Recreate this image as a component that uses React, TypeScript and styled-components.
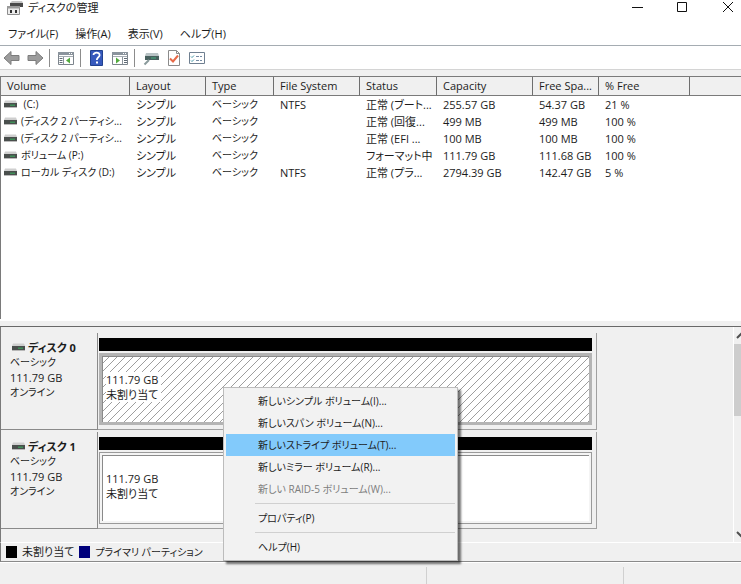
import React from "react";
import styled, { createGlobalStyle } from "styled-components";

const GlobalStyle = createGlobalStyle`
  * { box-sizing: border-box; }
  body {
    margin: 0;
    background: #fff;
    color: #1c1c1c;
    font-family: "Open Sans", "Noto Sans CJK JP", sans-serif;
    font-size: 11px;
    line-height: 16px;
    font-feature-settings: "palt" 1;
  }
  button {
    font: inherit;
    font-feature-settings: inherit;
    color: inherit;
    border: 0;
    padding: 0;
    background: transparent;
  }
`;

const Window = styled.div`
  position: relative;
  display: flex;
  flex-direction: column;
  min-height: 100vh;
  overflow: hidden;
  background: #f0f0f0;
`;

const TitleBar = styled.header`
  display: flex;
  align-items: flex-start;
  height: 22px;
  padding-left: 7px;
  gap: 5px;
  background: #fff;
`;

const Title = styled.h1`
  flex: 1;
  margin: 0;
  font-size: 11px;
  font-weight: 400;
  line-height: 16px;
`;

const WindowButtons = styled.div`
  display: flex;
  gap: 30px;
  padding-right: 3px;
`;

const WindowButton = styled.button`
  display: block;
  width: 16px;
  height: 16px;
`;

const MenuBar = styled.nav`
  display: flex;
  align-items: center;
  height: 24px;
  padding-left: 8px;
  gap: 17px;
  background: #fff;
  border-bottom: 1px solid #a5acb2;
`;

const ToolBar = styled.div`
  display: flex;
  align-items: center;
  height: 24px;
  padding: 0 3px;
  background: #fff;
  border-bottom: 1px solid #d4d4d4;
`;

const ToolButton = styled.button`
  display: block;
  width: 18px;
  height: 18px;
  margin-right: 5px;
`;

const ToolDivider = styled.span`
  width: 1px;
  height: 18px;
  margin-right: 7px;
  background: #8c8c8c;
`;

const VolumePane = styled.section`
  flex: 1;
  min-height: 240px;
  margin-top: 6px;
  background: #fff;
  border-top: 1px solid #7a7a7a;
  border-left: 1px solid #7a7a7a;
`;

const VolumeTable = styled.table`
  width: 100%;
  table-layout: fixed;
  border-collapse: separate;
  border-spacing: 0;
`;

const Col = styled.col<{ $w?: number }>`
  width: ${(p) => (p.$w ? `${p.$w}px` : "auto")};
`;

const HeadCell = styled.th`
  height: 19px;
  padding: 0 0 0 6px;
  overflow: hidden;
  white-space: nowrap;
  text-align: left;
  font-weight: 400;
  line-height: 16px;
  background: #f0f0f0;
  border-right: 1px solid #6e6e6e;
  border-bottom: 1px solid #7a7a7a;
  &:last-child { border-right: 0; }
`;

const Cell = styled.td<{ $compact?: boolean; $lead?: boolean }>`
  height: 17px;
  padding: 0 0 0 ${(p) => (p.$lead ? 3 : 6)}px;
  overflow: hidden;
  white-space: nowrap;
  font-size: ${(p) => (p.$compact ? 10 : 11)}px;
  line-height: 17px;
`;

const NameCell = styled.span`
  display: flex;
  align-items: center;
  gap: 4px;
`;

const Splitter = styled.div`
  height: 8px;
  border-top: 2px solid #fff;
  border-bottom: 1px solid #696969;
  background: #f0f0f0;
`;

const LowerPane = styled.section`
  display: flex;
  border-left: 1px solid #7a7a7a;
`;

const Disks = styled.div`
  flex: 1;
  min-width: 0;
  padding: 6px 136px 13px 0;
  display: flex;
  flex-direction: column;
  gap: 2px;
`;

const Disk = styled.article`
  display: grid;
  grid-template-columns: 97px 1fr;
  height: 97px;
`;

const DiskLabel = styled.div`
  padding: 7px 0 0 9px;
  line-height: 15px;
  border-right: 1px solid #8a8a8a;
  border-bottom: 1px solid #8a8a8a;
`;

const DiskName = styled.h2`
  display: flex;
  align-items: center;
  gap: 3px;
  margin: 0 0 0 2px;
  font-size: 11px;
  font-weight: 700;
  line-height: 15px;
`;

const DiskKind = styled.div`
  font-size: 10px;
`;

const DiskTrack = styled.div`
  display: flex;
  flex-direction: column;
  gap: 2px;
  padding: 5px 4px 4px 1px;
  border-right: 1px solid #a0a0a0;
  border-bottom: 1px solid #a0a0a0;
`;

const DiskStripe = styled.div`
  height: 13px;
  background: #000;
`;

const hatch = encodeURIComponent(
  `<svg xmlns="http://www.w3.org/2000/svg" width="8" height="8"><path d="M-1 9L9 -1M-1 1L1 -1M7 9L9 7" stroke="#858585" stroke-width="0.8"/></svg>`
);

const Region = styled.div<{ $selected?: boolean }>`
  flex: 1;
  display: flex;
  flex-direction: column;
  align-items: flex-start;
  justify-content: center;
  padding: 0 0 4px 4px;
  line-height: 15px;
  background: #fff;
  border: 3px solid ${(p) => (p.$selected ? "#b4b4b4" : "#f4f4f4")};
  outline: 1px solid ${(p) => (p.$selected ? "#b4b4b4" : "#9a9a9a")};
  outline-offset: -1px;
  box-shadow: inset 1px 1px 0 #8a8a8a;
  ${(p) => p.$selected && `background-image: url("data:image/svg+xml,${hatch}");`}
`;

const RegionText = styled.span`
  padding-right: 3px;
  background: #fff;
`;

const ScrollBar = styled.div`
  display: flex;
  flex-direction: column;
  width: 8px;
  overflow: hidden;
  border-left: 1px solid #fff;
`;

const ScrollButton = styled.button`
  display: block;
  width: 15px;
  height: 17px;
`;

const ScrollTrack = styled.div`
  flex: 1;
`;

const ScrollThumb = styled.div`
  height: 72px;
  background: #cdcdcd;
`;

const Legend = styled.div`
  display: flex;
  align-items: center;
  height: 20px;
  padding-left: 5px;
  gap: 5px;
  border-top: 1px solid #fff;
  border-left: 1px solid #7a7a7a;
  border-bottom: 1px solid #8a8a8a;
`;

const LegendText = styled.span<{ $compact?: boolean }>`
  font-size: ${(p) => (p.$compact ? 10 : 11)}px;
`;

const Swatch = styled.span<{ $color: string }>`
  width: 11px;
  height: 12px;
  background: ${(p) => p.$color};
`;

const StatusBar = styled.footer`
  display: grid;
  grid-template-columns: 427px 197px 1fr;
  height: 22px;
  padding-top: 4px;
  border-top: 1px solid #fff;
`;

const StatusCell = styled.div`
  border-right: 1px solid #d0d0d0;
  &:last-child { border-right: 0; }
`;

const ContextMenu = styled.div`
  position: absolute;
  left: 223px;
  bottom: 23px;
  width: 235px;
  padding: 2px;
  font-size: 10px;
  background: #f2f2f2;
  border: 1px solid #bcbcbc;
  box-shadow: 3px 3px 2px rgba(0, 0, 0, 0.55);
`;

const ContextItem = styled.button<{ $active?: boolean }>`
  display: block;
  width: 100%;
  height: 22px;
  padding-left: 32px;
  text-align: left;
  white-space: nowrap;
  background: ${(p) => (p.$active ? "#82cafb" : "transparent")};
  &:disabled { color: #7d7d7d; }
`;

const ContextDivider = styled.hr`
  height: 1px;
  margin: 3px 0 3px 29px;
  border: 0;
  background: #d0d0d0;
`;

const Drive = styled.svg`
  flex: none;
`;

const DriveIcon = () => (
  <Drive width="13" height="9" viewBox="0 0 13 9" aria-hidden="true">
    <path d="M1 0.500h11l1 2.500H0z" fill="#cfcfcf" />
    <path d="M0 3h13v4H0z" fill="#4a4f4d" />
    <path d="M0 7h13v.8H0z" fill="#aaa" />
    <path d="M6 4.500h5v1.500H6z" fill="#3f8f58" />
  </Drive>
);

const AppIcon = () => (
  <svg width="16" height="16" viewBox="0 0 16 16" aria-hidden="true">
    <path d="M5 1h10l1 2H3z" fill="#c4c4c4" />
    <path d="M3 3h13v4H3z" fill="#4a4a4a" />
    <path d="M0.500 7.500h12v7h-12z" fill="#ececec" stroke="#8d8d8d" />
    <path d="M0 6h13v2.500H0z" fill="#9a9a9a" />
    <path d="M3 10h2v3H3zM8 10h2v3H8z" fill="#333" />
  </svg>
);

const ArrowIcon = ({ forward }: { forward?: boolean }) => (
  <svg width="18" height="18" viewBox="0 0 18 18" aria-hidden="true">
    <path
      d={forward ? "M17 9l-7-6.500v4H2v5h8v4z" : "M1 9l7-6.500v4h8v5H8v4z"}
      fill="#9c9c9c"
      stroke="#7c7c7c"
    />
  </svg>
);

const ConsoleIcon = ({ flipped }: { flipped?: boolean }) => (
  <svg width="18" height="18" viewBox="0 0 18 18" aria-hidden="true">
    <path d="M1.500 3.500h15v12h-15z" fill="#fff" stroke="#7d858d" />
    <path d="M1 3h16v3H1z" fill="#8b949d" />
    <path d="M12 4.500h1M14 4.500h1" stroke="#fff" />
    <path d="M2 7.500h14" stroke="#a5acb3" />
    <path d={flipped ? "M11.500 8v7" : "M6.500 8v7"} stroke="#8c949c" />
    <path
      d={flipped ? "M13 9.500h3M13 11.500h3M13 13.500h3" : "M2.500 9.500h3M2.500 11.500h3M2.500 13.500h3"}
      stroke="#5f6a75"
    />
    <path d={flipped ? "M5 8.500v6l4-3z" : "M13 8.500v6l-4-3z"} fill="#53ab3e" />
  </svg>
);

const HelpIcon = () => (
  <svg width="18" height="18" viewBox="0 0 18 18" aria-hidden="true">
    <path d="M2.500 1.500h12v15h-12z" fill="#3659bd" stroke="#21418f" />
    <path d="M5.500 6C5.500 2.800 11.800 2.800 11.600 6.200C11.500 8.300 8.800 8.200 8.800 11" fill="none" stroke="#fff" strokeWidth="1.800" />
    <path d="M8 12.500h2v2H8z" fill="#fff" />
  </svg>
);

const ConnectIcon = () => (
  <svg width="18" height="18" viewBox="0 0 18 18" aria-hidden="true">
    <path d="M4 4h12l1 3H3z" fill="#b9c3c5" />
    <path d="M3 7h14v4H3z" fill="#48605e" />
    <path d="M9 9h5" stroke="#44ae7d" />
    <path d="M7 11l-4.500 4.500" stroke="#8a9a9b" strokeWidth="2" />
  </svg>
);

const CheckPageIcon = () => (
  <svg width="18" height="18" viewBox="0 0 18 18" aria-hidden="true">
    <path d="M3.500 1.500h8l3 3v12h-11z" fill="#fff" stroke="#8b8b8b" />
    <path d="M11.500 1.500v3h3" fill="none" stroke="#8b8b8b" />
    <path d="M5 9.500l3 3 5-6" fill="none" stroke="#e86a48" strokeWidth="2" />
  </svg>
);

const ListIcon = () => (
  <svg width="18" height="18" viewBox="0 0 18 18" aria-hidden="true">
    <path d="M1.500 3.500h15v11h-15z" fill="#fff" stroke="#6f7f90" />
    <path d="M3 7.500l1 1 2-2M3 11.500l1 1 2-2" fill="none" stroke="#4296a5" />
    <path d="M8 7.500h3M12 7.500h2M8 11.500h3M12 11.500h2" stroke="#758ba3" />
  </svg>
);

const columns: { label: string; width?: number; compact?: boolean }[] = [
  { label: "Volume", width: 129, compact: true },
  { label: "Layout", width: 76 },
  { label: "Type", width: 68, compact: true },
  { label: "File System", width: 86 },
  { label: "Status", width: 77 },
  { label: "Capacity", width: 96 },
  { label: "Free Spa...", width: 66 },
  { label: "% Free", width: 91 },
  { label: "" },
];

const volumes = [
  ["\u00a0(C:)", "シンプル", "ベーシック", "NTFS", "正常 (ブート...", "255.57 GB", "54.37 GB", "21 %"],
  ["(ディスク 2 パーティシ...", "シンプル", "ベーシック", "", "正常 (回復...", "499 MB", "499 MB", "100 %"],
  ["(ディスク 2 パーティシ...", "シンプル", "ベーシック", "", "正常 (EFI ...", "100 MB", "100 MB", "100 %"],
  ["ボリューム (P:)", "シンプル", "ベーシック", "", "フォーマット中", "111.79 GB", "111.68 GB", "100 %"],
  ["ローカル ディスク (D:)", "シンプル", "ベーシック", "NTFS", "正常 (プラ...", "2794.39 GB", "142.47 GB", "5 %"],
];

const disks = [
  { name: "ディスク 0", selected: true },
  { name: "ディスク 1", selected: false },
];

export default function App() {
  return (
    <>
      <GlobalStyle />
      <Window>
        <TitleBar>
          <AppIcon />
          <Title>ディスクの管理</Title>
          <WindowButtons>
            <WindowButton aria-label="最小化">
              <svg width="16" height="16" viewBox="0 0 16 16"><path d="M2 7.500h11" stroke="#111" /></svg>
            </WindowButton>
            <WindowButton aria-label="最大化">
              <svg width="16" height="16" viewBox="0 0 16 16"><path d="M1.500 2.500h9v9h-9z" fill="none" stroke="#111" /></svg>
            </WindowButton>
            <WindowButton aria-label="閉じる">
              <svg width="16" height="16" viewBox="0 0 16 16"><path d="M1 2l10 10M11 2L1 12" stroke="#111" /></svg>
            </WindowButton>
          </WindowButtons>
        </TitleBar>
        <MenuBar>
          <button>ファイル(F)</button>
          <button>操作(A)</button>
          <button>表示(V)</button>
          <button>ヘルプ(H)</button>
        </MenuBar>
        <ToolBar>
          <ToolButton aria-label="戻る"><ArrowIcon /></ToolButton>
          <ToolButton aria-label="進む"><ArrowIcon forward /></ToolButton>
          <ToolDivider />
          <ToolButton aria-label="コンソール ツリー"><ConsoleIcon /></ToolButton>
          <ToolDivider />
          <ToolButton aria-label="ヘルプ"><HelpIcon /></ToolButton>
          <ToolButton aria-label="操作ウィンドウ"><ConsoleIcon flipped /></ToolButton>
          <ToolDivider />
          <ToolButton aria-label="接続"><ConnectIcon /></ToolButton>
          <ToolButton aria-label="プロパティ"><CheckPageIcon /></ToolButton>
          <ToolButton aria-label="設定"><ListIcon /></ToolButton>
        </ToolBar>
        <VolumePane>
          <VolumeTable>
            <colgroup>
              {columns.map((c, i) => <Col key={i} $w={c.width} />)}
            </colgroup>
            <thead>
              <tr>{columns.map((c, i) => <HeadCell key={i}>{c.label}</HeadCell>)}</tr>
            </thead>
            <tbody>
              {volumes.map((row, r) => (
                <tr key={r}>
                  {row.map((text, i) => (
                    <Cell key={i} $lead={i === 0} $compact={columns[i].compact}>
                      {i === 0 ? <NameCell><DriveIcon />{text}</NameCell> : text}
                    </Cell>
                  ))}
                </tr>
              ))}
            </tbody>
          </VolumeTable>
        </VolumePane>
        <Splitter />
        <LowerPane>
          <Disks>
            {disks.map((d) => (
              <Disk key={d.name}>
                <DiskLabel>
                  <DiskName><DriveIcon />{d.name}</DiskName>
                  <DiskKind>ベーシック</DiskKind>
                  <div>111.79 GB</div>
                  <DiskKind>オンライン</DiskKind>
                </DiskLabel>
                <DiskTrack>
                  <DiskStripe />
                  <Region $selected={d.selected}>
                    <RegionText>111.79 GB</RegionText>
                    <RegionText>未割り当て</RegionText>
                  </Region>
                </DiskTrack>
              </Disk>
            ))}
          </Disks>
          <ScrollBar>
            <ScrollButton aria-label="上へ">
              <svg width="15" height="17" viewBox="0 0 15 17"><path d="M3 11l4-4 4 4" fill="none" stroke="#505050" strokeWidth="2" /></svg>
            </ScrollButton>
            <ScrollTrack><ScrollThumb /></ScrollTrack>
            <ScrollButton aria-label="下へ">
              <svg width="15" height="17" viewBox="0 0 15 17"><path d="M3 7l4 4 4-4" fill="none" stroke="#505050" strokeWidth="2" /></svg>
            </ScrollButton>
          </ScrollBar>
        </LowerPane>
        <Legend>
          <Swatch $color="#000" />
          <LegendText>未割り当て</LegendText>
          <Swatch $color="#00007b" />
          <LegendText $compact>プライマリ パーティション</LegendText>
        </Legend>
        <StatusBar>
          <StatusCell /><StatusCell /><StatusCell />
        </StatusBar>
        <ContextMenu role="menu">
          <ContextItem role="menuitem">新しいシンプル ボリューム(I)...</ContextItem>
          <ContextItem role="menuitem">新しいスパン ボリューム(N)...</ContextItem>
          <ContextItem role="menuitem" $active>新しいストライプ ボリューム(T)...</ContextItem>
          <ContextItem role="menuitem">新しいミラー ボリューム(R)...</ContextItem>
          <ContextItem role="menuitem" disabled>新しい RAID-5 ボリューム(W)...</ContextItem>
          <ContextDivider />
          <ContextItem role="menuitem">プロパティ(P)</ContextItem>
          <ContextDivider />
          <ContextItem role="menuitem">ヘルプ(H)</ContextItem>
        </ContextMenu>
      </Window>
    </>
  );
}
